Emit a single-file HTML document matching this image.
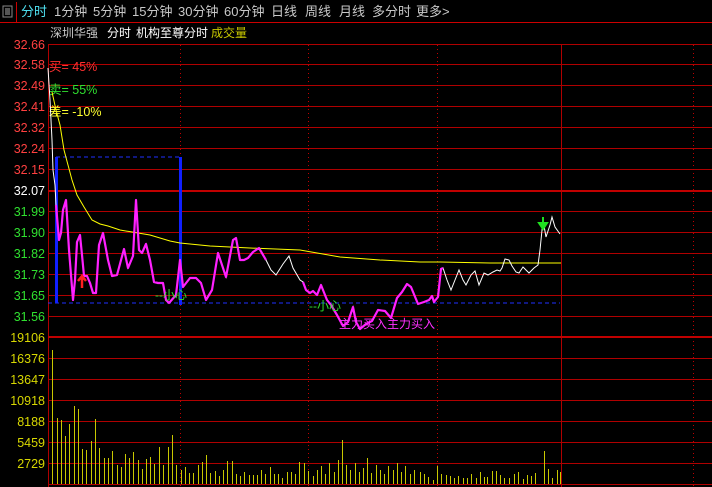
<!DOCTYPE html>
<html><head><meta charset="utf-8"><style>
html,body{margin:0;padding:0;background:#000;width:712px;height:487px;overflow:hidden}
svg{display:block}
text{font-family:"Liberation Sans","Noto Sans CJK SC",sans-serif}
</style></head><body>
<svg width="712" height="487" viewBox="0 0 712 487" xmlns="http://www.w3.org/2000/svg">
<rect width="712" height="487" fill="#000"/>
<rect x="3" y="6" width="9" height="11" fill="none" stroke="#888" stroke-width="1"/>
<rect x="5" y="8" width="5" height="7" fill="#555"/>
<line x1="16.5" y1="2" x2="16.5" y2="22" stroke="#c00"/>
<line x1="0" y1="22.5" x2="712" y2="22.5" stroke="#c00"/>
<g font-size="13" fill="#c8c8c8">
<text x="21" y="16" fill="#4fe0f0">分时</text>
<text x="54" y="16">1分钟</text>
<text x="93" y="16">5分钟</text>
<text x="132" y="16">15分钟</text>
<text x="178" y="16">30分钟</text>
<text x="224" y="16">60分钟</text>
<text x="271" y="16">日线</text>
<text x="305" y="16">周线</text>
<text x="339" y="16">月线</text>
<text x="372" y="16">多分时</text>
<text x="416" y="16">更多&gt;</text>
</g>
<g font-size="12">
<text x="50" y="37" fill="#c8c8c8">深圳华强</text>
<text x="107" y="37" fill="#fff">分时</text>
<text x="136" y="37" fill="#fff">机构至尊分时</text>
<text x="211" y="37" fill="#c8c800">成交量</text>
</g>
<g stroke="#b00000" stroke-width="1">
<line x1="48.5" y1="44" x2="48.5" y2="487"/>
<line x1="48" y1="44.5" x2="712" y2="44.5"/>
<line x1="48" y1="64.5" x2="712" y2="64.5"/>
<line x1="48" y1="85.5" x2="712" y2="85.5"/>
<line x1="48" y1="106.5" x2="712" y2="106.5"/>
<line x1="48" y1="127.5" x2="712" y2="127.5"/>
<line x1="48" y1="148.5" x2="712" y2="148.5"/>
<line x1="48" y1="169.5" x2="712" y2="169.5"/>
<line x1="48" y1="211.5" x2="712" y2="211.5"/>
<line x1="48" y1="232.5" x2="712" y2="232.5"/>
<line x1="48" y1="253.5" x2="712" y2="253.5"/>
<line x1="48" y1="274.5" x2="712" y2="274.5"/>
<line x1="48" y1="295.5" x2="712" y2="295.5"/>
<line x1="48" y1="316.5" x2="712" y2="316.5"/>
<line x1="48" y1="358.5" x2="712" y2="358.5"/>
<line x1="48" y1="379.5" x2="712" y2="379.5"/>
<line x1="48" y1="400.5" x2="712" y2="400.5"/>
<line x1="48" y1="421.5" x2="712" y2="421.5"/>
<line x1="48" y1="442.5" x2="712" y2="442.5"/>
<line x1="48" y1="463.5" x2="712" y2="463.5"/>
<line x1="48" y1="484.5" x2="712" y2="484.5"/>
<line x1="561.5" y1="44" x2="561.5" y2="487"/>
</g>
<g stroke="#c00000" stroke-width="2">
<line x1="48" y1="191" x2="712" y2="191"/>
<line x1="48" y1="337" x2="712" y2="337"/>
</g>
<g stroke="#c00000" stroke-width="1" stroke-dasharray="1,3">
<line x1="180.5" y1="45" x2="180.5" y2="487"/>
<line x1="308.5" y1="45" x2="308.5" y2="487"/>
<line x1="437.5" y1="45" x2="437.5" y2="487"/>
<line x1="693.5" y1="45" x2="693.5" y2="487"/>
</g>
<g font-size="12.5" text-anchor="end">
<text x="45" y="49" fill="#ff4040">32.66</text>
<text x="45" y="69" fill="#ff4040">32.58</text>
<text x="45" y="90" fill="#ff4040">32.49</text>
<text x="45" y="111" fill="#ff4040">32.41</text>
<text x="45" y="132" fill="#ff4040">32.32</text>
<text x="45" y="153" fill="#ff4040">32.24</text>
<text x="45" y="174" fill="#ff4040">32.15</text>
<text x="45" y="195" fill="#fff">32.07</text>
<text x="45" y="216" fill="#30e030">31.99</text>
<text x="45" y="237" fill="#30e030">31.90</text>
<text x="45" y="258" fill="#30e030">31.82</text>
<text x="45" y="279" fill="#30e030">31.73</text>
<text x="45" y="300" fill="#30e030">31.65</text>
<text x="45" y="321" fill="#30e030">31.56</text>
<g fill="#d8d800">
<text x="45" y="342">19106</text>
<text x="45" y="363">16376</text>
<text x="45" y="384">13647</text>
<text x="45" y="405">10918</text>
<text x="45" y="426">8188</text>
<text x="45" y="447">5459</text>
<text x="45" y="468">2729</text>
</g>
</g>
<g font-size="12.5">
<text x="49" y="71" fill="#ff3030">买= 45%</text>
<text x="49" y="94" fill="#30e030">卖= 55%</text>
<text x="49" y="116" fill="#ffff30">差= -10%</text>
</g>
<line x1="56" y1="157" x2="180" y2="157" stroke="#2030ff" stroke-dasharray="4,3"/>
<line x1="48" y1="303" x2="560" y2="303" stroke="#2030ff" stroke-dasharray="4,3"/>
<rect x="55" y="157" width="3" height="146" fill="#1020ff"/>
<rect x="179" y="157" width="3" height="148" fill="#1020ff"/>
<polyline fill="none" stroke="#ffff00" stroke-width="1" points="52,92 56,110 60,125 64,150 68,165 72,180 77,195 84,207 92,220 100,224 108,226 120,230 138,233 150,235 170,241 180,243 210,246 250,248 300,250 340,257 380,260 420,262 440,262 490,263 525,263 561,263"/>
<polyline fill="none" stroke="#fff" stroke-width="1" points="48,68 50,100 52,140 53,170 55,185 56,205 59,240 61,233 63,210 66,200 69,250 73,300 75,280 77,242 80,235 82,255 84,276 87,276 90,283 93,293 96,293 99,245 103,233 108,260 112,276 117,275 124,249 128,268 133,256 136,200 139,250 142,253 146,244 150,260 154,282 158,283 163,283 166,300 169,303 176,295 180,260 183,287 190,278 196,278 201,283 206,300 212,290 218,253 226,277 233,240 236,238 240,260 244,260 248,258 253,252 259,248 266,260 271,270 276,275 283,264 289,256 293,268 300,280 303,282 306,290 310,293 313,291 317,295 321,285 327,300 331,305 337,315 343,326 348,322 353,307 356,322 360,329 366,324 372,321 378,310 385,311 391,318 397,298 402,292 407,284 411,287 418,304 424,302 429,300 432,296 434,302 438,297 441,269 443,268 447,280 451,290 455,280 459,270 463,280 466,285 471,275 475,271 479,285 484,273 488,275 493,272 497,270 500,271 502,268 505,259 509,260 512,266 516,272 519,273 523,267 525,269 529,273 534,268 538,265 540,250 541,240 543,220 546,237 550,225 552,217 555,227 560,234"/>
<g fill="none" stroke="#ff20ff" stroke-width="2.2" stroke-linejoin="round">
<polyline points="56,205 59,240 61,233 63,210 66,200 69,250 73,300 75,280 77,242 80,235 82,255 84,276 87,276 90,283 93,293 96,293 99,245 103,233 108,260 112,276 117,275 124,249 128,268 133,256 136,200 139,250 142,253 146,244 150,260 154,282 158,283 163,283 166,300 169,303 176,295 180,260 183,287 190,278 196,278 201,283 206,300 212,290 218,253 226,277 233,240 236,238 240,260 244,260 248,258 253,252 259,248 266,260"/>
<polyline points="303,282 306,290 310,293 313,291 317,295 321,285 327,300 331,305 337,315 343,326 348,322 353,307 356,322 360,329 366,324 372,321 378,310 385,311 391,318 397,298 402,292 407,284 411,287 418,304 424,302 429,300 432,296 434,302 438,297 441,269 443,268"/>
</g>
<path d="M82 276 L82 288 M78 281 L82 276 L86 281" stroke="#ff2020" stroke-width="2.5" fill="none"/>
<path d="M543 217 L543 224 M539 223 L543 229 L547 223 Z" stroke="#20e020" stroke-width="2" fill="#20e020"/>
<g font-size="12">
<text x="155" y="299" fill="#30e030">--小心</text>
<text x="309" y="310" fill="#30e030">--小心</text>
<text x="339" y="328" fill="#ff30ff">主力买入主力买入</text>
</g>
<g stroke="#c8c800" stroke-width="1">
<path d="M52.5 484V350M57.5 484V418M61.5 484V420M65.5 484V436M69.5 484V424M74.5 484V406M78.5 484V409M82.5 484V449M86.5 484V450M91.5 484V441M95.5 484V419M99.5 484V448M104.5 484V458M108.5 484V458M112.5 484V451M117.5 484V465M121.5 484V467M125.5 484V454M129.5 484V458M133.5 484V452M138.5 484V460M142.5 484V469M146.5 484V459M150.5 484V457M154.5 484V464M159.5 484V447M163.5 484V465M168.5 484V447M172.5 484V435M176.5 484V465M181.5 484V470M185.5 484V467M189.5 484V473M193.5 484V473M198.5 484V465M202.5 484V462M206.5 484V455M210.5 484V473M215.5 484V471M219.5 484V476M223.5 484V470M227.5 484V461M232.5 484V461M236.5 484V474M240.5 484V476M244.5 484V472M249.5 484V475M253.5 484V475M257.5 484V475M261.5 484V470M265.5 484V474M270.5 484V467M274.5 484V474M278.5 484V474M282.5 484V478M287.5 484V472M291.5 484V472M295.5 484V474M299.5 484V462M304.5 484V463M308.5 484V471M313.5 484V476M317.5 484V470M321.5 484V466M325.5 484V474M329.5 484V463M334.5 484V472M338.5 484V460M342.5 484V440M346.5 484V465M350.5 484V470M355.5 484V463M359.5 484V472M363.5 484V468M367.5 484V458M371.5 484V473M376.5 484V465M380.5 484V470M384.5 484V474M388.5 484V466M393.5 484V470M397.5 484V463M401.5 484V472M405.5 484V466M410.5 484V474M414.5 484V470M420.5 484V472M424.5 484V474M428.5 484V477M433.5 484V480M437.5 484V466M441.5 484V474M446.5 484V475M450.5 484V476M454.5 484V478M458.5 484V476M463.5 484V478M467.5 484V478M471.5 484V474M476.5 484V478M480.5 484V472M484.5 484V477M487.5 484V477M492.5 484V471M496.5 484V471M500.5 484V475M504.5 484V478M509.5 484V478M514.5 484V474M518.5 484V472M523.5 484V479M527.5 484V475M531.5 484V476M535.5 484V473M544.5 484V451M548.5 484V469M552.5 484V478M557.5 484V470M560.5 484V472"/>
</g>
</svg>
</body></html>
